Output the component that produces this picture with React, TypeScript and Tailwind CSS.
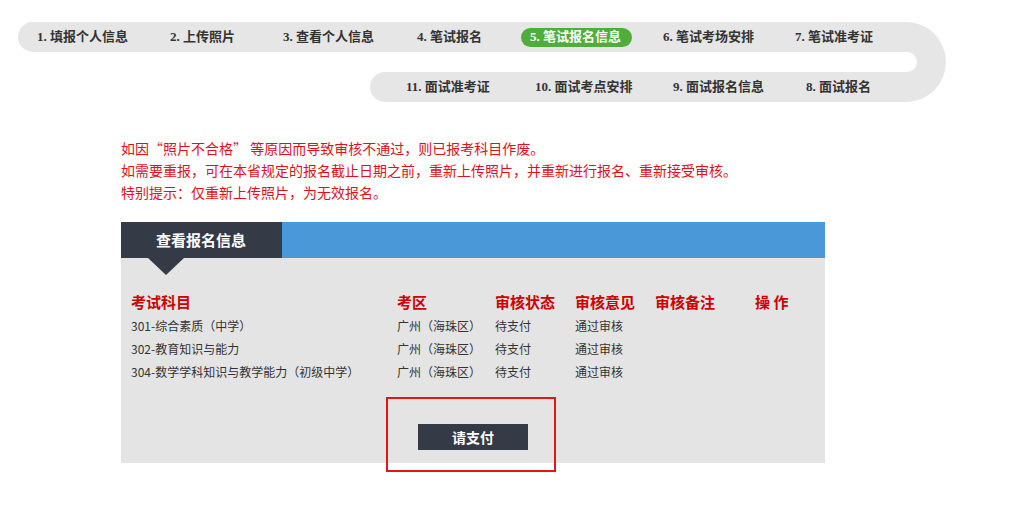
import React from 'react';

const stepFont = { fontFamily: '"Liberation Serif", "Noto Sans CJK SC", serif' };

const topSteps = [
  { label: '1. 填报个人信息', w: 'w-[133px]' },
  { label: '2. 上传照片', w: 'w-[113px]' },
  { label: '3. 查看个人信息', w: 'w-[134px]' },
  { label: '4. 笔试报名', w: 'w-[104px]' },
];

const bottomSteps = [
  { label: '11. 面试准考证', w: 'w-[129px]' },
  { label: '10. 面试考点安排', w: 'w-[138px]' },
  { label: '9. 面试报名信息', w: 'w-[133px]' },
  { label: '8. 面试报名', w: 'w-[100px]' },
];

const rows = [
  { subject: '301-综合素质（中学）', area: '广州（海珠区）', status: '待支付', opinion: '通过审核' },
  { subject: '302-教育知识与能力', area: '广州（海珠区）', status: '待支付', opinion: '通过审核' },
  { subject: '304-数学学科知识与教学能力（初级中学）', area: '广州（海珠区）', status: '待支付', opinion: '通过审核' },
];

function Stepper() {
  return (
    <div className="flex ml-[18px] pt-[22px]" style={stepFont}>
      <div className="flex flex-col w-[888px]">
        {/* top row */}
        <div className="h-[30px] bg-[#e6e6e6] rounded-l-[15px] flex items-center pl-[19px] text-[13px] font-bold text-[#333]">
          {topSteps.map(s => (
            <div key={s.label} className={`${s.w} whitespace-nowrap`}>{s.label}</div>
          ))}
          <div className="h-[19px] px-[9px] w-[111px] rounded-full bg-[#4ead3b] text-white flex items-center whitespace-nowrap">
            5. 笔试报名信息
          </div>
          <div className="w-[132px] ml-[31px] whitespace-nowrap">6. 笔试考场安排</div>
          <div className="whitespace-nowrap">7. 笔试准考证</div>
        </div>
        <div className="h-[20px]" />
        {/* bottom row */}
        <div className="h-[30px] flex">
          <div className="w-[354px]" />
          <div className="flex-1 bg-[#e6e6e6] rounded-l-[15px] flex items-center pl-[36px] text-[13px] font-bold text-[#333]">
            {bottomSteps.map(s => (
              <div key={s.label} className={`${s.w} whitespace-nowrap`}>{s.label}</div>
            ))}
          </div>
        </div>
      </div>
      {/* U turn */}
      <div className="w-[40px] h-[80px] bg-[#e6e6e6] rounded-r-[40px] flex flex-col">
        <div className="h-[30px]" />
        <div className="h-[20px] w-[11px] bg-white rounded-r-[10px]" />
      </div>
    </div>
  );
}

export default function App() {
  return (
    <div className="w-[1018px] h-[516px] bg-white overflow-hidden" style={{ fontFamily: '"Noto Sans CJK SC", sans-serif' }}>
      <Stepper />

      {/* Notice */}
      <div className="ml-[121px] mt-[35px] text-[14px] leading-[22px] text-[#dd1122]">
        <p>如因“照片不合格” 等原因而导致审核不通过，则已报考科目作废。</p>
        <p>如需要重报，可在本省规定的报名截止日期之前，重新上传照片，并重新进行报名、重新接受审核。</p>
        <p>特别提示：仅重新上传照片，为无效报名。</p>
      </div>

      {/* Panel */}
      <div className="relative ml-[121px] mt-[19px] w-[704px]">
        <div className="flex h-[36px]">
          <div className="w-[161px] bg-[#343a46] text-white text-[15px] font-bold flex items-center pl-[35px]">
            查看报名信息
          </div>
          <div className="flex-1 bg-[#4b98d9]" />
        </div>
        <div className="bg-[#e4e4e4] pb-[13px]">
          <div className="ml-[27px] w-0 h-0 border-l-[18px] border-r-[18px] border-t-[17px] border-l-transparent border-r-transparent border-t-[#343a46]" />
          <div className="pl-[10px] mt-[16px]">
            <div className="grid grid-cols-[266px_98px_80px_80px_100px_1fr] h-[20px] items-center text-[15px] font-bold text-[#cc0000]">
              <div>考试科目</div>
              <div>考区</div>
              <div>审核状态</div>
              <div>审核意见</div>
              <div>审核备注</div>
              <div>操 作</div>
            </div>
            <div className="mt-[3px]">
              {rows.map(r => (
                <div key={r.subject} className="grid grid-cols-[266px_98px_80px_80px_100px_1fr] h-[23px] items-center text-[12px] text-[#333]">
                  <div className="whitespace-nowrap">{r.subject}</div>
                  <div className="whitespace-nowrap">{r.area}</div>
                  <div>{r.status}</div>
                  <div>{r.opinion}</div>
                  <div />
                  <div />
                </div>
              ))}
            </div>
          </div>
          <div className="flex justify-center mt-[41px]">
            <button className="w-[110px] h-[26px] bg-[#343a46] text-white text-[14px] font-bold flex items-center justify-center">
              请支付
            </button>
          </div>
        </div>
        {/* highlight annotation */}
        <div className="absolute left-[265px] top-[175px] w-[170px] h-[75px] border-2 border-[#e0161b]" />
      </div>
    </div>
  );
}
